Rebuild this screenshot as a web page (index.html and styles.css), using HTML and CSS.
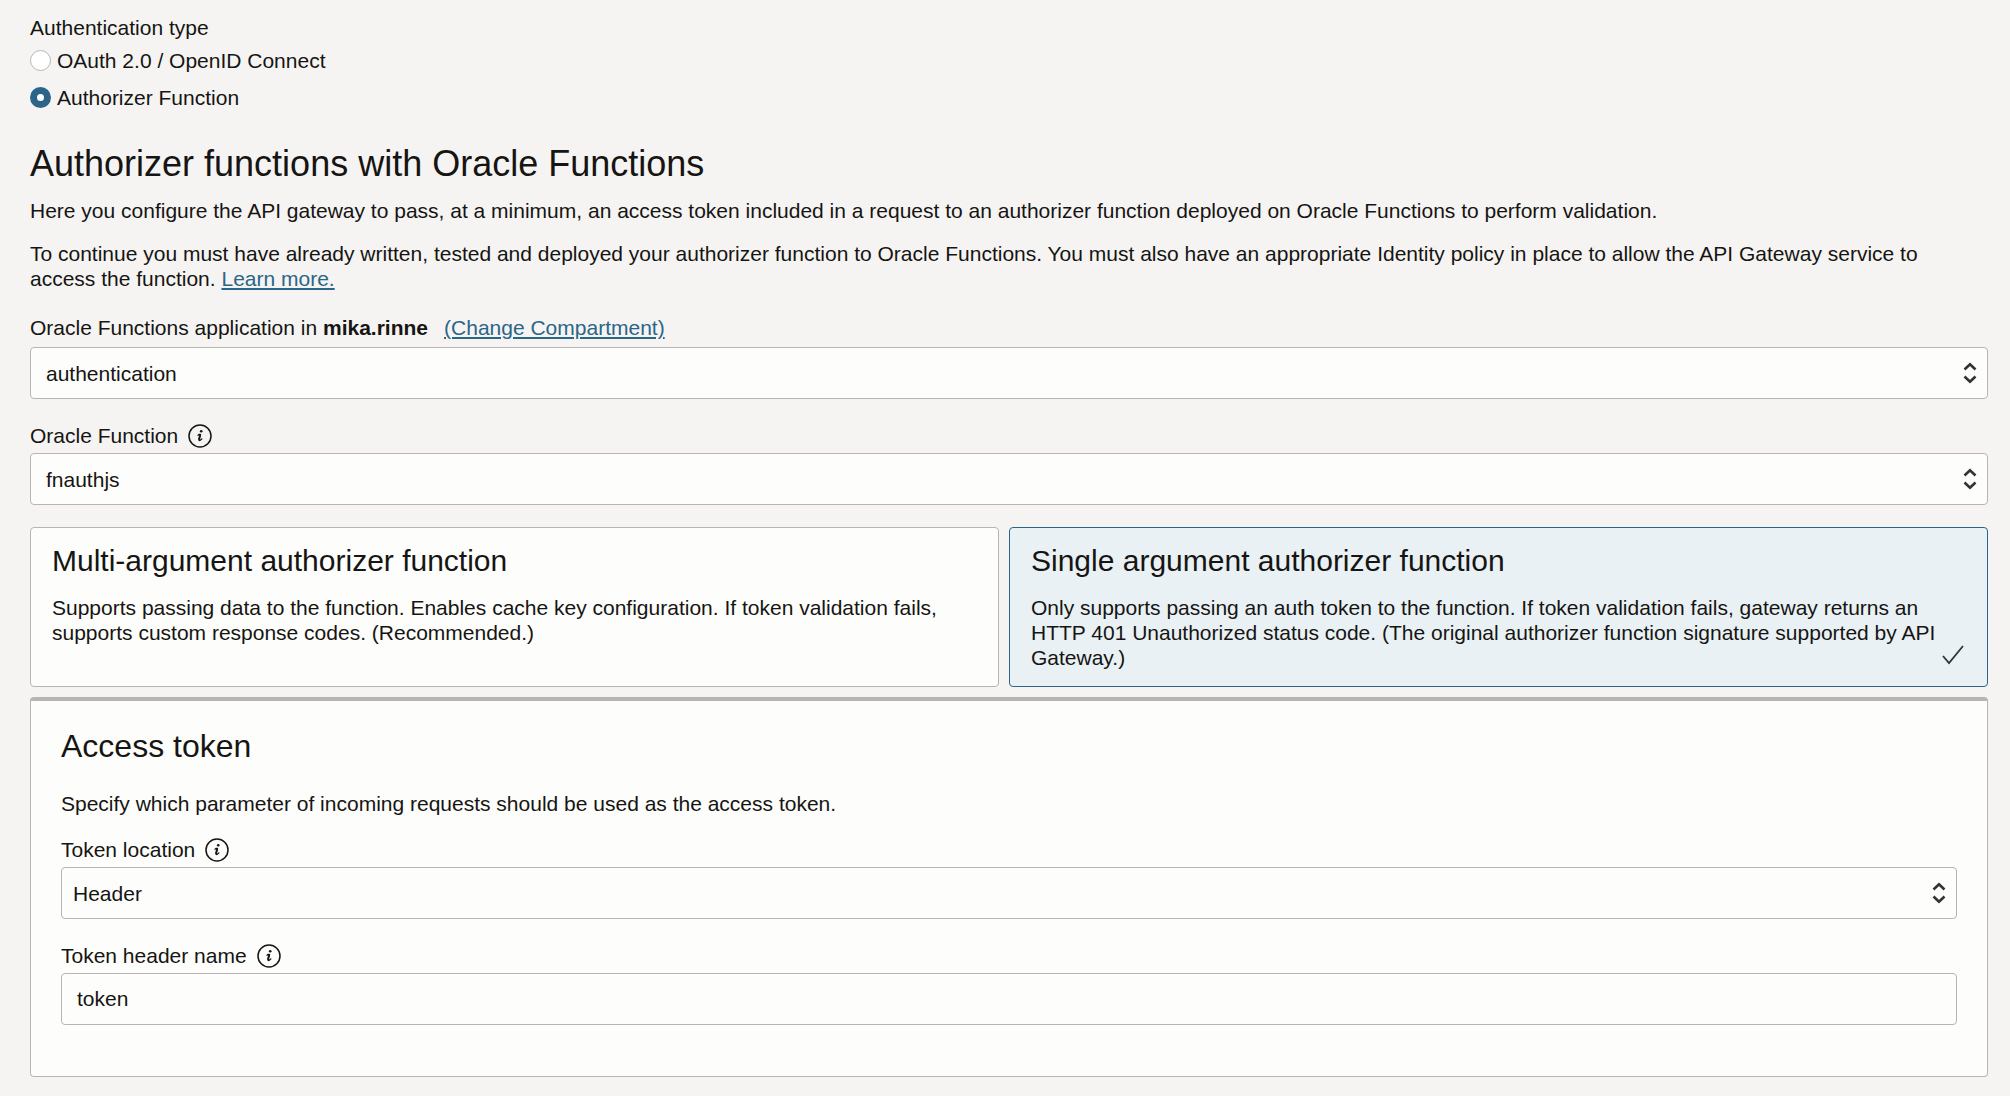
FILE: index.html
```html
<!DOCTYPE html>
<html lang="en">
<head>
<meta charset="utf-8">
<meta name="viewport" content="width=device-width, initial-scale=1">
<title>Authentication</title>
<link rel="stylesheet" href="styles.css">
</head>
<body>
<svg class="sprite" aria-hidden="true">
  <symbol id="info" viewBox="0 0 24 24">
    <circle cx="12" cy="12" r="11" fill="none" stroke="currentColor" stroke-width="1.500"/>
    <circle cx="13.200" cy="7.300" r="1.300" fill="currentColor"/>
    <path d="M10 11.200l1.200-.9h1.200l-1.400 5.200q-.2 1.300.9.9l1.900-1.400" fill="none" stroke="currentColor" stroke-width="1.300" stroke-linecap="round" stroke-linejoin="round"/>
    <path d="M12.300 10.400l-1.300 5.400" fill="none" stroke="currentColor" stroke-width="1.900"/>
  </symbol>
  <symbol id="updown" viewBox="0 0 14 22">
    <path d="M1.500 7.500L7 2.200l5.500 5.300M1.500 14.500L7 19.800l5.500-5.300" fill="none" stroke="currentColor" stroke-width="2.600"/>
  </symbol>
</svg>
<form class="page">
  <fieldset class="auth-type">
    <legend>Authentication type</legend>
    <label class="option"><input type="radio" name="auth" value="oauth"> OAuth 2.0 / OpenID Connect</label>
    <label class="option"><input type="radio" name="auth" value="function" checked> Authorizer Function</label>
  </fieldset>

  <h1>Authorizer functions with Oracle Functions</h1>
  <p>Here you configure the API gateway to pass, at a minimum, an access token included in a request to an authorizer function deployed on Oracle Functions to perform validation.</p>
  <p>To continue you must have already written, tested and deployed your authorizer function to Oracle Functions. You must also have an appropriate Identity policy in place to allow the API Gateway service to access the function. <a href="#learn">Learn more.</a></p>

  <div class="field application">
    <div class="label-row">
      <label for="application">Oracle Functions application in <strong>mika.rinne</strong></label>
      <a href="#compartment">(Change Compartment)</a>
    </div>
    <div class="select">
      <select id="application"><option>authentication</option></select>
      <svg class="arrows" aria-hidden="true"><use href="#updown"/></svg>
    </div>
  </div>

  <div class="field">
    <div class="label-row">
      <label for="function">Oracle Function</label>
      <button type="button" class="info" aria-label="About Oracle Function"><svg><use href="#info"/></svg></button>
    </div>
    <div class="select">
      <select id="function"><option>fnauthjs</option></select>
      <svg class="arrows" aria-hidden="true"><use href="#updown"/></svg>
    </div>
  </div>

  <div class="cards">
    <button type="button" class="card" aria-pressed="false">
      <span class="card-title">Multi-argument authorizer function</span>
      <span class="card-text">Supports passing data to the function. Enables cache key configuration. If token validation fails, supports custom response codes. (Recommended.)</span>
    </button>
    <button type="button" class="card selected" aria-pressed="true">
      <span class="card-title">Single argument authorizer function</span>
      <span class="card-text">Only supports passing an auth token to the function. If token validation fails, gateway returns an HTTP 401 Unauthorized status code. (The original authorizer function signature supported by API Gateway.)</span>
      <svg class="check" viewBox="0 0 22 20" aria-hidden="true"><path d="M1 11l6 7L21 1" fill="none" stroke="currentColor" stroke-width="1.800"/></svg>
    </button>
  </div>

  <section class="panel">
    <h2>Access token</h2>
    <p>Specify which parameter of incoming requests should be used as the access token.</p>
    <div class="field">
      <div class="label-row">
        <label for="location">Token location</label>
        <button type="button" class="info" aria-label="About token location"><svg><use href="#info"/></svg></button>
      </div>
      <div class="select compact">
        <select id="location"><option>Header</option></select>
        <svg class="arrows" aria-hidden="true"><use href="#updown"/></svg>
      </div>
    </div>
    <div class="field">
      <div class="label-row">
        <label for="header-name">Token header name</label>
        <button type="button" class="info" aria-label="About token header name"><svg><use href="#info"/></svg></button>
      </div>
      <input id="header-name" class="text" type="text" value="token">
    </div>
  </section>
</form>
</body>
</html>
```
FILE: styles.css
```css
:root {
  --ink: #161513;
  --icon: #343331;
  --link: #2b6688;
  --line: #b9b4b1;
  --surface: #fdfdfb;
}

* { box-sizing: border-box; }

body {
  margin: 0;
  background: #f5f4f2;
  color: var(--ink);
  font: 21px/25px "Helvetica Neue", "Liberation Sans", Arial, sans-serif;
}

button, input, select { font: inherit; color: inherit; }

h1, h2, p { margin: 0; font-weight: 400; }

a {
  color: var(--link);
  text-decoration-thickness: 2px;
  text-underline-offset: 2px;
}

.sprite { display: none; }

.page { padding: 15px 22px 19px 30px; }

.auth-type {
  display: flex;
  flex-direction: column;
  gap: 12px;
  margin: 0;
  padding: 0;
  border: 0;
}

.auth-type legend { padding: 0; margin-bottom: 8px; }

.option {
  display: flex;
  align-items: center;
  gap: 6px;
}

.option input {
  appearance: none;
  width: 21px;
  height: 21px;
  margin: 0;
  border: 1px solid var(--line);
  border-radius: 50%;
  background: #fff;
}

.option input:checked {
  border: 7px solid var(--link);
}

h1 {
  margin-top: 33px;
  font-size: 36px;
  line-height: 42px;
}

h1 + p { margin-top: 13px; }
p + p { margin-top: 18px; }

.field { margin-top: 24px; }

.label-row {
  display: flex;
  align-items: center;
  gap: 10px;
  margin-bottom: 5px;
}

.application .label-row { gap: 16px; margin-bottom: 7px; }

.info {
  display: flex;
  padding: 0;
  border: 0;
  background: none;
}

.info svg { width: 24px; height: 24px; }

.select { display: grid; align-items: center; }
.select > * { grid-area: 1 / 1; }

select, .text {
  appearance: none;
  width: 100%;
  height: 52px;
  margin: 0;
  padding: 0 15px;
  border: 1px solid var(--line);
  border-radius: 4px;
  background: var(--surface);
}

.compact select { padding-left: 11px; }

.arrows {
  justify-self: end;
  width: 14px;
  height: 22px;
  margin-right: 11px;
  color: var(--icon);
  pointer-events: none;
}

.cards {
  display: grid;
  grid-template-columns: 1fr 1fr;
  margin-top: 22px;
}

.card {
  position: relative;
  display: flex;
  flex-direction: column;
  gap: 16px;
  padding: 15px 21px 16px;
  border: 1px solid var(--line);
  border-radius: 4px;
  background: var(--surface);
  text-align: left;
}

.card:first-child { margin-right: 10px; }

.card.selected {
  border-color: var(--link);
  background: #e9f1f5;
}

.card-title { font-size: 30px; line-height: 36px; }

.check {
  position: absolute;
  right: 23px;
  bottom: 21px;
  width: 22px;
  height: 20px;
  color: var(--icon);
}

.panel {
  margin-top: 10px;
  padding: 26px 30px 51px;
  border: 1px solid var(--line);
  border-top-width: 4px;
  border-radius: 4px;
  background: var(--surface);
}

h2 {
  margin-bottom: 26px;
  font-size: 32px;
  line-height: 38px;
}

.panel p + .field { margin-top: 21px; }
```
